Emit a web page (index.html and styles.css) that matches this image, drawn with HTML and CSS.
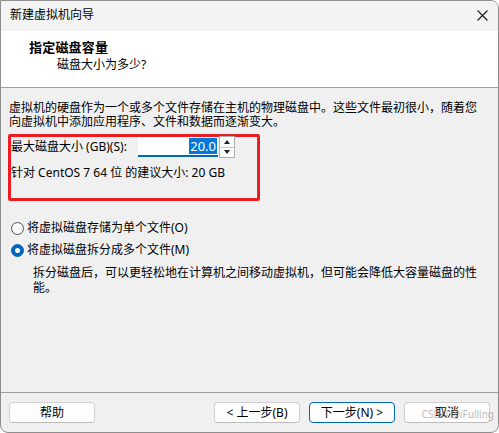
FILE: index.html
```html
<!DOCTYPE html>
<html lang="zh-CN">
<head>
<meta charset="utf-8">
<title>新建虚拟机向导</title>
<link rel="stylesheet" href="styles.css">
</head>
<body>
<div class="window">
  <div class="titlebar">
    <span class="title">新建虚拟机向导</span>
    <svg class="close" width="11" height="11" viewBox="0 0 11 11"><path d="M0.5 0.5 L10.5 10.5 M10.5 0.5 L0.5 10.5" stroke="#1a1a1a" stroke-width="1.1" fill="none"/></svg>
  </div>
  <div class="header">
    <div class="h-title">指定磁盘容量</div>
    <div class="h-sub">磁盘大小为多少?</div>
  </div>
  <div class="content">
    <p class="intro">虚拟机的硬盘作为一个或多个文件存储在主机的物理磁盘中。这些文件最初很小，随着您<br>向虚拟机中添加应用程序、文件和数据而逐渐变大。</p>
    <div class="redbox">
      <div class="sizerow">
        <span class="label">最大磁盘大小 (GB)(S):</span>
        <div class="spin-input"><span class="sel">20.0</span></div>
        <div class="spin">
          <div class="spin-btn"><span class="tri-up"></span></div>
          <div class="spin-btn"><span class="tri-down"></span></div>
        </div>
      </div>
      <div class="hint">针对 CentOS 7 64 位 的建议大小: 20 GB</div>
    </div>
    <div class="options">
      <div class="radio-row"><span class="radio"></span><span>将虚拟磁盘存储为单个文件(O)</span></div>
      <div class="radio-row second"><span class="radio checked"></span><span>将虚拟磁盘拆分成多个文件(M)</span></div>
      <p class="desc">拆分磁盘后，可以更轻松地在计算机之间移动虚拟机，但可能会降低大容量磁盘的性<br>能。</p>
    </div>
  </div>
  <div class="footer">
    <div class="btn">帮助</div>
    <div class="spacer"></div>
    <div class="btn">&lt; 上一步(B)</div>
    <div class="btn primary">下一步(N) &gt;</div>
    <div class="btn">取消</div>
  </div>
  <div class="watermark">CSDN @iFulling</div>
</div>
</body>
</html>
```
FILE: styles.css
```css
html, body {
  margin: 0;
  padding: 0;
}
body {
  width: 499px;
  height: 433px;
  overflow: hidden;
  background: #ffffff;
  font-family: "Noto Sans", "Noto Sans CJK SC", sans-serif;
  font-size: 12px;
  color: #000;
}
.window {
  position: relative;
  box-sizing: border-box;
  width: 499px;
  height: 433px;
  border: 1px solid #8e8e8e;
  border-radius: 0 8px 8px 8px;
  overflow: hidden;
  display: flex;
  flex-direction: column;
  background: #f0f0f0;
}
.titlebar {
  box-sizing: border-box;
  height: 30px;
  flex: none;
  display: flex;
  align-items: center;
  justify-content: space-between;
  padding: 0 10px 2px 9px;
  background: #f3f3f3;
  line-height: 14px;
}
.close {
  display: block;
}
.header {
  box-sizing: border-box;
  height: 57px;
  flex: none;
  background: #ffffff;
  border-bottom: 1px solid #a0a0a0;
  padding: 8px 0 0 28px;
}
.h-title {
  font-weight: bold;
  font-size: 13px;
  line-height: 16px;
  letter-spacing: 0.2px;
}
.h-sub {
  margin: 3px 0 0 28px;
  line-height: 14px;
}
.content {
  flex: 1;
  padding: 13px 8px 0 8px;
}
.intro {
  margin: 0;
  line-height: 14px;
  white-space: nowrap;
}
.redbox {
  box-sizing: border-box;
  width: 252px;
  height: 67px;
  margin: 5px 0 0 -1px;
  border: 3px solid #ec1c24;
  border-radius: 2px;
}
.sizerow {
  display: flex;
  align-items: center;
  height: 22px;
  margin-top: -1px;
}
.label {
  width: 127px;
  flex: none;
  white-space: nowrap;
  line-height: 14px;
}
.spin-input {
  box-sizing: border-box;
  width: 80px;
  height: 20px;
  background: #ffffff;
  border-bottom: 2px solid #0067c0;
  display: flex;
  justify-content: flex-end;
  align-items: center;
  padding: 0 1px 0 0;
}
.sel {
  background: #0078d7;
  color: #ffffff;
  font-size: 13px;
  line-height: 16px;
  padding: 0 1px;
}
.spin {
  box-sizing: border-box;
  width: 16px;
  height: 22px;
  margin-left: 1px;
  border: 1px solid #adadad;
  background: #fdfdfd;
  display: flex;
  flex-direction: column;
}
.spin-btn {
  flex: 1;
  display: flex;
  align-items: center;
  justify-content: center;
}
.spin-btn + .spin-btn {
  border-top: 1px solid #c8c8c8;
}
.tri-up {
  width: 0;
  height: 0;
  border-left: 3px solid transparent;
  border-right: 3px solid transparent;
  border-bottom: 4px solid #222;
}
.tri-down {
  width: 0;
  height: 0;
  border-left: 3px solid transparent;
  border-right: 3px solid transparent;
  border-top: 4px solid #222;
}
.hint {
  margin-top: 8px;
  line-height: 14px;
  white-space: nowrap;
}
.options {
  margin-top: 19px;
}
.radio-row {
  display: flex;
  align-items: center;
  height: 16px;
  gap: 3px;
  padding-left: 2px;
  line-height: 14px;
}
.radio-row.second {
  margin-top: 6px;
}
.radio {
  box-sizing: border-box;
  width: 13px;
  height: 13px;
  border-radius: 50%;
  border: 1px solid #505050;
  background: #fbfbfb;
  flex: none;
  position: relative;
}
.radio.checked {
  border-color: #0067c0;
  background: #0067c0;
}
.radio.checked::after {
  content: "";
  position: absolute;
  left: 3px;
  top: 3px;
  width: 5px;
  height: 5px;
  border-radius: 50%;
  background: #ffffff;
}
.desc {
  margin: 7px 0 0 24px;
  line-height: 15px;
  white-space: nowrap;
}
.footer {
  box-sizing: border-box;
  height: 40px;
  flex: none;
  border-top: 1px solid #a0a0a0;
  display: flex;
  align-items: flex-start;
  gap: 9px;
  padding: 9px 8px 0 8px;
}
.spacer {
  flex: 1;
}
.btn {
  box-sizing: border-box;
  width: 86px;
  height: 21px;
  background: #fdfdfd;
  border: 1px solid #d0d0d0;
  border-bottom-color: #bcbcbc;
  border-radius: 4px;
  display: flex;
  align-items: center;
  justify-content: center;
  line-height: 14px;
  white-space: nowrap;
}
.btn.primary {
  border: 1px solid #0067c0;
}
.watermark {
  position: absolute;
  right: 4px;
  bottom: 12px;
  font-family: "Noto Sans", sans-serif;
  font-size: 10px;
  line-height: 12px;
  color: rgba(140, 140, 140, 0.6);
}
```
